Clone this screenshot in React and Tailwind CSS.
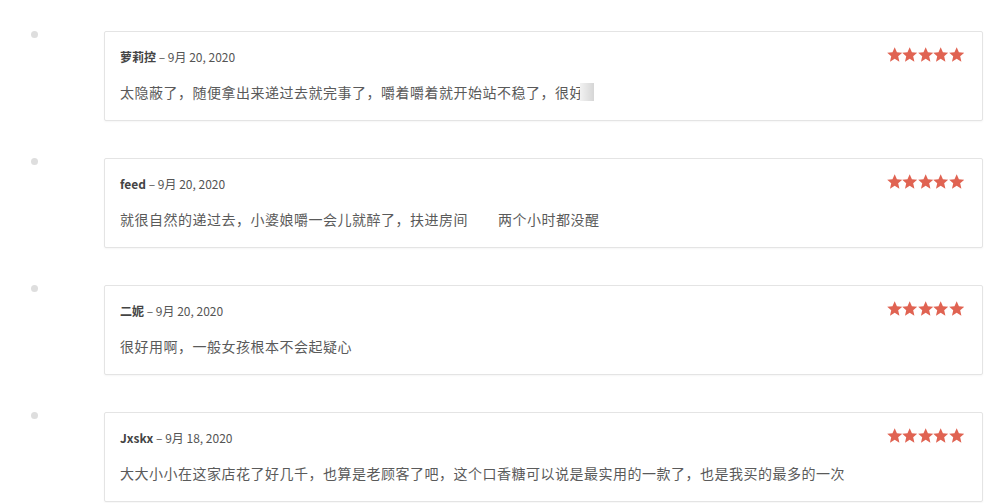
const reviews = [
  {
    author: '萝莉控',
    date: '9月 20, 2020',
    text: '太隐蔽了，随便拿出来递过去就完事了，嚼着嚼着就开始站不稳了，很好',
    fade: true,
  },
  {
    author: 'feed',
    date: '9月 20, 2020',
    text: '就很自然的递过去，小婆娘嚼一会儿就醉了，扶进房间',
    tail: '两个小时都没醒',
  },
  { author: '二妮', date: '9月 20, 2020', text: '很好用啊，一般女孩根本不会起疑心' },
  {
    author: 'Jxskx',
    date: '9月 18, 2020',
    text: '大大小小在这家店花了好几千，也算是老顾客了吧，这个口香糖可以说是最实用的一款了，也是我买的最多的一次',
  },
]

function Star() {
  return <svg viewBox="1.2 1.3 21.6 20.4" className="h-[15px] w-[15.4px]" fill="#e06352">
    <path d="M12 1.5l3.1 6.9 7.4.7-5.6 5 1.7 7.4L12 17.6l-6.6 3.9 1.7-7.4-5.6-5 7.4-.7z" />
  </svg>
}

function Review({ author, date, text, fade, tail }) {
  return <div className="flex items-start">
    <span className="h-[7px] w-[7px] shrink-0 rounded-full bg-[#dedede]" />
    <div className="ml-[66px] h-[90px] flex-1 rounded-[2px] border border-[#e4e4e4] bg-white px-[15px] pt-[17px] shadow-[0_1px_2px_rgba(0,0,0,0.04)]">
      <div className="flex items-start justify-between">
        <p className="text-[12px] leading-[16px] text-[#555]">
          <span className="font-semibold text-[#444]">{author}</span> – {date}
        </p>
        <div className="mr-[3px] mt-[-2px] flex">
          <Star /><Star /><Star /><Star /><Star />
        </div>
      </div>
      <p className="mt-[18px] flex items-center text-[14px] leading-[18px] tracking-[0.5px] text-[#5a5a5a]">
        <span>{text}</span>
        {fade && <span className="ml-[-4px] h-[18px] w-[14px] bg-gradient-to-r from-[#f2f2f2] to-[#d6d6d6]" />}
        {tail && <span className="ml-[30px]">{tail}</span>}
      </p>
    </div>
  </div>
}

export default function App() {
  return <div className="h-[503px] w-[1000px] overflow-hidden bg-white pl-[31px] pr-[17px] pt-[31px] font-['Noto_Sans_CJK_SC','Liberation_Sans',sans-serif]">
    <div className="flex flex-col gap-[37px]">
      {reviews.map((r) => <Review key={r.author} {...r} />)}
    </div>
  </div>
}
